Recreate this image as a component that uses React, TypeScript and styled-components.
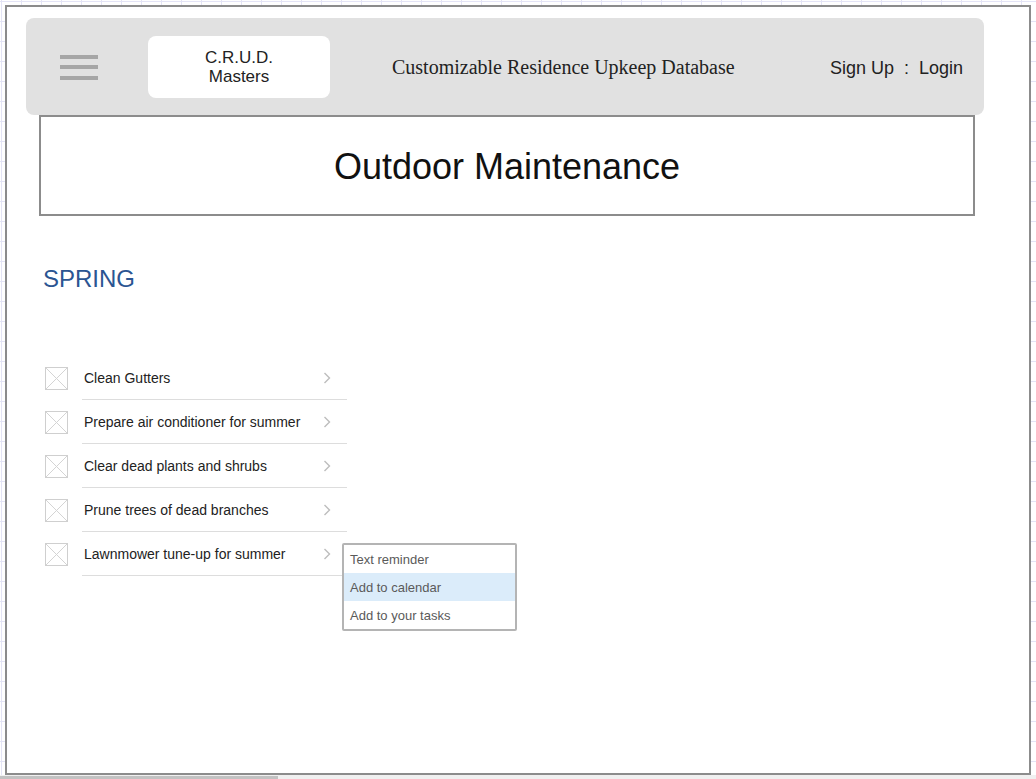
import React from "react";
import styled, { createGlobalStyle } from "styled-components";

const GlobalStyle = createGlobalStyle`
  html, body { margin: 0; padding: 0; }
  body { font-family: "Liberation Sans", Arial, sans-serif; background: #ffffff; }
  * { box-sizing: border-box; }
`;

const Page = styled.div`
  width: 1036px;
  height: 779px;
  overflow: hidden;
  display: flex;
  flex-direction: column;
`;

const Canvas = styled.div`
  padding: 5px 5px 0 5px;
  background-color: #ffffff;
  background-image:
    linear-gradient(to right, #e4e4f6 1px, transparent 1px),
    linear-gradient(to bottom, #e4e4f6 1px, transparent 1px);
  background-size: 20px 20px;
  background-position: 1px 1px;
`;

const Frame = styled.div`
  width: 1026px;
  height: 770px;
  border: 2px solid #8c8c8c;
  background: #ffffff;
  display: flex;
  flex-direction: column;
`;

const ScrollTrack = styled.div`
  height: 4px;
  background: #f0f0f0;
  padding-top: 1px;
`;

const ScrollThumb = styled.div`
  width: 278px;
  height: 3px;
  background: #c2c2c2;
`;

const Header = styled.header`
  margin: 11px 0 0 19px;
  width: 958px;
  height: 97px;
  background: #e1e1e1;
  border-radius: 8px;
  display: flex;
  align-items: center;
  padding: 0 21px 0 34px;
`;

const Hamburger = styled.div`
  width: 38px;
  display: flex;
  flex-direction: column;
  gap: 6.5px;
  margin-top: 1px;
`;

const Bar = styled.span`
  display: block;
  height: 4px;
  background: #a6a6a6;
`;

const Logo = styled.div`
  margin-left: 50px;
  width: 182px;
  height: 62px;
  background: #ffffff;
  border-radius: 8px;
  display: flex;
  flex-direction: column;
  align-items: center;
  justify-content: center;
  font-size: 17px;
  line-height: 19px;
  color: #222222;
  text-align: center;
  padding-top: 1px;
`;

const SiteTitle = styled.div`
  margin-left: 62px;
  font-family: "Liberation Serif", "Times New Roman", serif;
  font-size: 20px;
  color: #222222;
  flex: 1;
  margin-top: 1px;
`;

const AuthLinks = styled.div`
  font-size: 18px;
  color: #222222;
  white-space: pre;
  margin-top: 3px;
`;

const TitleBox = styled.div`
  margin-left: 32px;
  width: 936px;
  height: 101px;
  border: 2px solid #8c8c8c;
  display: flex;
  align-items: center;
  justify-content: center;
  font-size: 36px;
  color: #111111;
  padding-top: 2px;
`;

const Season = styled.h2`
  margin: 49px 0 0 36px;
  font-size: 24px;
  line-height: 28px;
  font-weight: normal;
  color: #2b5592;
`;

const TaskList = styled.ul`
  list-style: none;
  margin: 63px 0 0 38px;
  padding: 0;
  width: 302px;
`;

const Row = styled.li`
  position: relative;
  height: 44px;
  display: flex;
  align-items: center;
`;

const CheckIcon = styled.svg`
  width: 23px;
  height: 23px;
  margin-right: 14px;
  flex: none;
`;

const RowBody = styled.div`
  flex: 1;
  height: 100%;
  border-bottom: 1px solid #dddddd;
  display: flex;
  align-items: center;
  justify-content: space-between;
  padding: 0 16px 0 2px;
  font-size: 14px;
  color: #222222;
`;

const Chevron = styled.svg`
  width: 8px;
  height: 12px;
`;

const Menu = styled.div`
  position: absolute;
  left: 297px;
  top: 11px;
  width: 175px;
  border: 2px solid #b4b4b4;
  border-radius: 2px;
  background: #ffffff;
  z-index: 2;
`;

const MenuItem = styled.div<{ $active?: boolean }>`
  height: 28px;
  display: flex;
  align-items: center;
  padding-left: 6px;
  font-size: 13px;
  color: #5a5a5a;
  background: ${(p) => (p.$active ? "#dbecfa" : "transparent")};
`;

const tasks = [
  "Clean Gutters",
  "Prepare air conditioner for summer",
  "Clear dead plants and shrubs",
  "Prune trees of dead branches",
  "Lawnmower tune-up for summer",
];

const Checkbox = () => (
  <CheckIcon viewBox="0 0 23 23">
    <rect x="0.5" y="0.5" width="22" height="22" fill="#fff" stroke="#cfcfcf" />
    <line x1="1" y1="1" x2="22" y2="22" stroke="#d4d4d4" />
    <line x1="22" y1="1" x2="1" y2="22" stroke="#d4d4d4" />
  </CheckIcon>
);

const ChevronRight = () => (
  <Chevron viewBox="0 0 8 12">
    <polyline points="1.5,1 6.5,6 1.5,11" fill="none" stroke="#bdbdbd" strokeWidth="1.4" />
  </Chevron>
);

export default function App() {
  return (
    <Page>
      <GlobalStyle />
      <Canvas>
        <Frame>
          <Header>
            <Hamburger>
              <Bar />
              <Bar />
              <Bar />
            </Hamburger>
            <Logo>
              <span>C.R.U.D.</span>
              <span>Masters</span>
            </Logo>
            <SiteTitle>Customizable Residence Upkeep Database</SiteTitle>
            <AuthLinks>{"Sign Up  :  Login"}</AuthLinks>
          </Header>
          <TitleBox>Outdoor Maintenance</TitleBox>
          <Season>SPRING</Season>
          <TaskList>
            {tasks.map((t, i) => (
              <Row key={t}>
                <Checkbox />
                <RowBody>
                  <span>{t}</span>
                  <ChevronRight />
                </RowBody>
                {i === tasks.length - 1 && (
                  <Menu>
                    <MenuItem>Text reminder</MenuItem>
                    <MenuItem $active>Add to calendar</MenuItem>
                    <MenuItem>Add to your tasks</MenuItem>
                  </Menu>
                )}
              </Row>
            ))}
          </TaskList>
        </Frame>
      </Canvas>
      <ScrollTrack>
        <ScrollThumb />
      </ScrollTrack>
    </Page>
  );
}
